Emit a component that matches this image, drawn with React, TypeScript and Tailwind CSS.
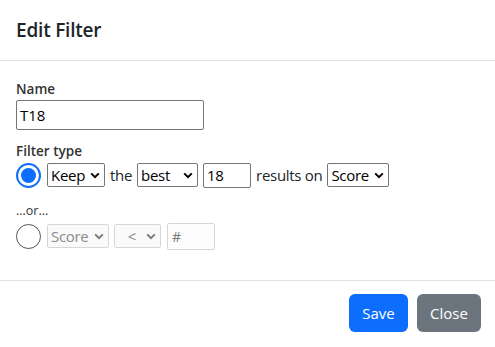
import React from "react";

const Chevron = ({ color = "#000" }: { color?: string }) => (
  <svg width="10" height="7" viewBox="0 0 10 7" className="shrink-0">
    <path d="M1.2 1.4 L5 5.2 L8.8 1.4" fill="none" stroke={color} strokeWidth="2" />
  </svg>
);

const FakeSelect = ({
  value,
  width,
  disabled,
  center,
}: {
  value: string;
  width: string;
  disabled?: boolean;
  center?: boolean;
}) => (
  <div
    className={`${width} h-[24px] flex items-center justify-between pl-[3px] pr-[4px] rounded-[2px] border ${
      disabled
        ? "border-[#d7d7d7] bg-[#fafafa] text-[#8a8a8a]"
        : "border-[#767676] bg-white text-black"
    }`}
  >
    <span className={`${center ? "w-full text-center" : ""} leading-none`}>{value}</span>
    <Chevron color={disabled ? "#7a7a7a" : "#000"} />
  </div>
);

const App = () => {
  return (
    <div
      className="w-[495px] h-[347px] bg-white text-[#212529] flex flex-col"
      style={{ fontFamily: '"Open Sans", "Noto Sans", sans-serif' }}
    >
      <div className="h-[61px] border-b border-[#dee2e6] flex items-center px-4">
        <h5 className="text-[19px] font-semibold tracking-[-0.2px]">Edit Filter</h5>
      </div>

      <div className="h-[220px] border-b border-[#dee2e6] px-4 pt-[18px]">
        <div className="text-[13.5px] font-semibold text-[#333] leading-[20px]">Name</div>
        <div className="w-[188px] h-[30px] mt-[1px] border border-[#767676] rounded-[2px] flex items-center px-[3px] text-[15px] text-black">
          T18
        </div>

        <div className="text-[13.5px] font-semibold text-[#333] leading-[20px] mt-[11px]">Filter type</div>
        <div className="flex items-center h-[28px] text-[15px] tracking-[-0.3px]">
          <div className="w-[25px] h-[25px] rounded-full border-[2px] border-[#0d6efd] flex items-center justify-center">
            <div className="w-[15px] h-[15px] rounded-full bg-[#0d6efd]" />
          </div>
          <div className="ml-[6px]">
            <FakeSelect value="Keep" width="w-[58px]" />
          </div>
          <span className="ml-[5px] mr-[5px] text-[#212529]">the</span>
          <FakeSelect value="best" width="w-[61px]" />
          <div className="ml-[5px] w-[48px] h-[25px] border border-[#767676] rounded-[2px] flex items-center px-[3px] text-black">
            18
          </div>
          <span className="ml-[5px] mr-[5px]">results on</span>
          <FakeSelect value="Score" width="w-[62px]" />
        </div>

        <div className="text-[12.5px] text-[#333] mt-[14px] leading-[16px]">...or...</div>
        <div className="flex items-center h-[28px] mt-[3px] text-[15px] tracking-[-0.3px]">
          <div className="w-[25px] h-[25px] rounded-full border border-[#555]" />
          <div className="ml-[6px]">
            <FakeSelect value="Score" width="w-[62px]" disabled />
          </div>
          <div className="ml-[5px]">
            <FakeSelect value="<" width="w-[47px]" disabled center />
          </div>
          <div className="ml-[6px] w-[48px] h-[27px] border border-[#d7d7d7] rounded-[2px] bg-[#fdfdfd] flex items-center px-[4px] text-[#777] text-[14px]">
            #
          </div>
        </div>
      </div>

      <div className="flex-1 flex items-center justify-end gap-[9px] pr-[14px] pb-[2px]">
        <button className="w-[59px] h-[38px] rounded-[6px] bg-[#0d6efd] text-white text-[15px]">
          Save
        </button>
        <button className="w-[64px] h-[38px] rounded-[6px] bg-[#6c757d] text-white text-[15px]">
          Close
        </button>
      </div>
    </div>
  );
};

export default App;
